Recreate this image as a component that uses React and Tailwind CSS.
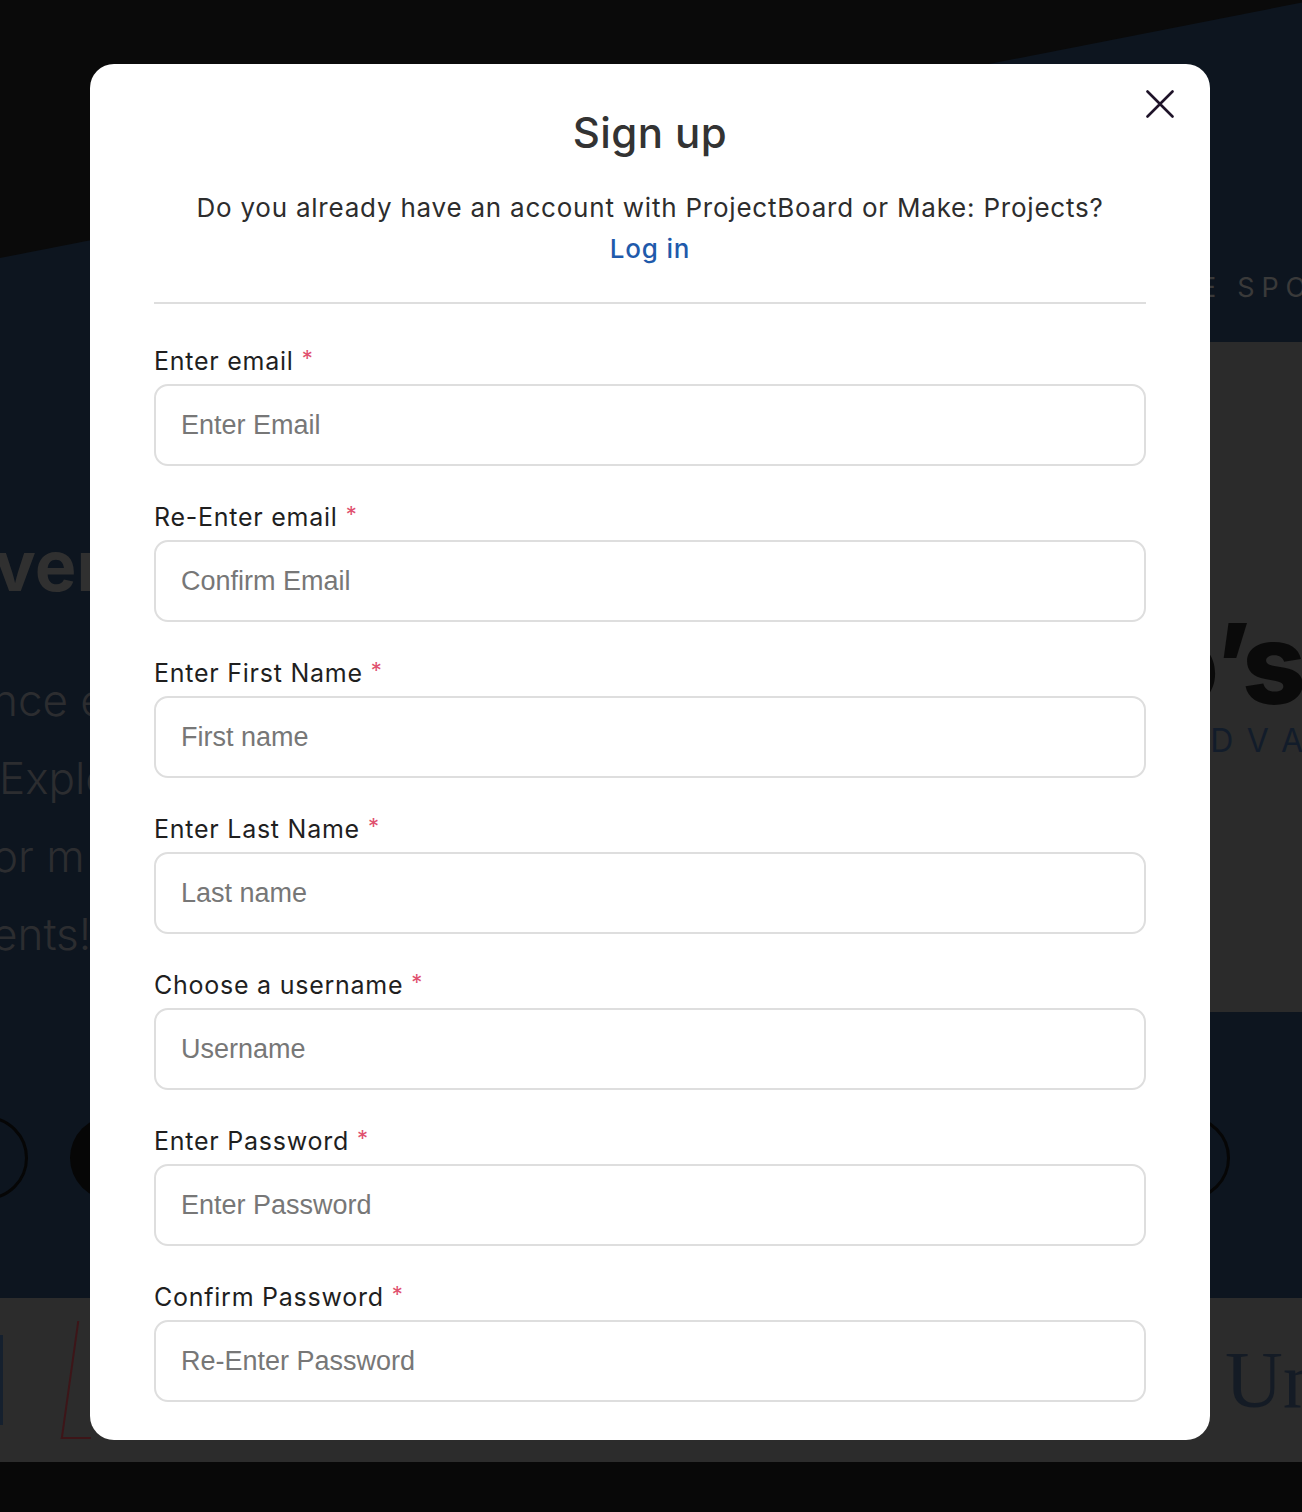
import React from "react";

const fields = [
  { label: "Enter email", placeholder: "Enter Email", type: "email" },
  { label: "Re-Enter email", placeholder: "Confirm Email", type: "email" },
  { label: "Enter First Name", placeholder: "First name", type: "text" },
  { label: "Enter Last Name", placeholder: "Last name", type: "text" },
  { label: "Choose a username", placeholder: "Username", type: "text" },
  { label: "Enter Password", placeholder: "Enter Password", type: "password" },
  { label: "Confirm Password", placeholder: "Re-Enter Password", type: "password" },
];

const sans = "[font-family:Inter,'Noto_Sans',sans-serif]";

function Field({ label, placeholder, type }) {
  return (
    <div className="flex flex-col">
      <label className="flex h-[30px] items-center text-[25px] leading-[30px] tracking-[0.03em] text-[#1f1f1f] [font-family:Inter,'Noto_Sans',sans-serif]">
        {label}
        <span className="relative -top-[3px] ml-[8px] text-[22px] leading-none text-[#e0506e]">*</span>
      </label>
      <input
        type={type}
        placeholder={placeholder}
        className="mt-[8px] h-[82px] w-full rounded-[14px] border-2 border-[#dedede] bg-white px-[25px] text-[27px] text-[#333] outline-none placeholder:text-[#777] [font-family:'Liberation_Sans',Arial,sans-serif]"
      />
    </div>
  );
}

export default function App() {
  return (
    <div className="relative h-[1512px] w-[1302px] overflow-hidden bg-[#0a0a0a]">
      {/* Background page */}
      <div className="flex h-full flex-col">
        <div className="relative h-[1298px] bg-[#0d151f]">
          <div className="absolute left-0 top-0 h-[258px] w-full bg-[#0a0a0a] [clip-path:polygon(0_0,100%_0,100%_1%,0_100%)]" />
          <div className="flex h-full pt-[264px]">
            <div className="flex w-[600px] flex-col text-[#2c2d30] [font-family:Inter,sans-serif]">
              <div className="mt-[262px] -ml-[6px] text-[70px] font-bold leading-[80px] text-[#303030]">ver</div>
              <div className="mt-[55px] -ml-[8px] text-[44px] font-light leading-[78px]">nce e</div>
              <div className="-ml-[1px] text-[44px] font-light leading-[78px]">Explo</div>
              <div className="-ml-[8px] text-[44px] font-light leading-[78px]">or m</div>
              <div className="-ml-[8px] text-[44px] font-light leading-[78px]">ents!</div>
            </div>
            <div className="ml-auto flex w-[500px] flex-col">
              <div className="ml-[398px] whitespace-nowrap text-[27px] leading-[48px] tracking-[0.25em] text-[#3a3a3a] [font-family:Inter,sans-serif]">E SPONSORS</div>
              <div className="mt-[30px] flex h-[670px] flex-col items-end justify-center bg-[#2b2b2b]">
                <div className="-mr-[2px] mt-[20px] text-[112px] font-extrabold leading-[96px] tracking-[-0.02em] text-[#0a0a0a] [font-family:Inter,sans-serif]">
                  lo’s
                </div>
                <div className="-mr-[54px] mt-[12px] text-[32px] leading-[36px] tracking-[0.45em] text-[#121c2a] [font-family:Inter,sans-serif]">ADVAN</div>
              </div>
            </div>
          </div>
          <div className="absolute left-[-56px] top-[1116px] h-[84px] w-[84px] rounded-full border-[3px] border-[#060606]" />
          <div className="absolute left-[70px] top-[1116px] h-[84px] w-[84px] rounded-full bg-[#060606]" />
          <div className="absolute left-[1146px] top-[1116px] h-[84px] w-[84px] rounded-full border-[3px] border-[#060606]" />
        </div>
        <div className="flex h-[164px] items-center bg-[#2c2c2c]">
          <div className="h-[90px] w-[3px] bg-[#15202e]" />
          <div className="ml-[66px] h-[118px] w-[30px] border-l-2 border-b-2 border-[#3d1518] [transform:skewX(-8deg)]" />
          <div className="ml-auto -mr-[43px] text-[80px] leading-none text-[#141b25] [font-family:'Liberation_Serif',serif]">Uni</div>
        </div>
        <div className="flex-1 bg-[#080808]" />
      </div>

      {/* Modal overlay */}
      <div className="absolute inset-0 flex items-start pl-[90px] pt-[64px]">
        <div className="relative h-[1376px] w-[1120px] rounded-[24px] bg-white px-[64px] pt-[39px]">
          <button className="absolute right-[36px] top-[26px] flex h-[28px] w-[28px] items-center justify-center" aria-label="Close">
            <svg width="28" height="28" viewBox="0 0 28 28" fill="none" stroke="#1f1329" strokeWidth="2.6" strokeLinecap="round">
              <path d="M1.5 1.5 L26.5 26.5 M26.5 1.5 L1.5 26.5" />
            </svg>
          </button>
          <h1 className={`text-center text-[42px] font-medium leading-[60px] tracking-[0.01em] text-[#333] ${sans}`}>Sign up</h1>
          <p className={`mt-[24px] text-center text-[26px] leading-[41px] tracking-[0.03em] text-[#2d2d2d] ${sans}`}>
            Do you already have an account with ProjectBoard or Make: Projects?
            <br />
            <a href="#" className="font-medium text-[#1f5aab]">Log in</a>
          </p>
          <hr className="mt-[33px] border-t-2 border-[#dedede]" />
          <form className="mt-[42px] flex flex-col gap-[36px]">
            {fields.map((f) => (
              <Field key={f.label} {...f} />
            ))}
          </form>
        </div>
      </div>
    </div>
  );
}
